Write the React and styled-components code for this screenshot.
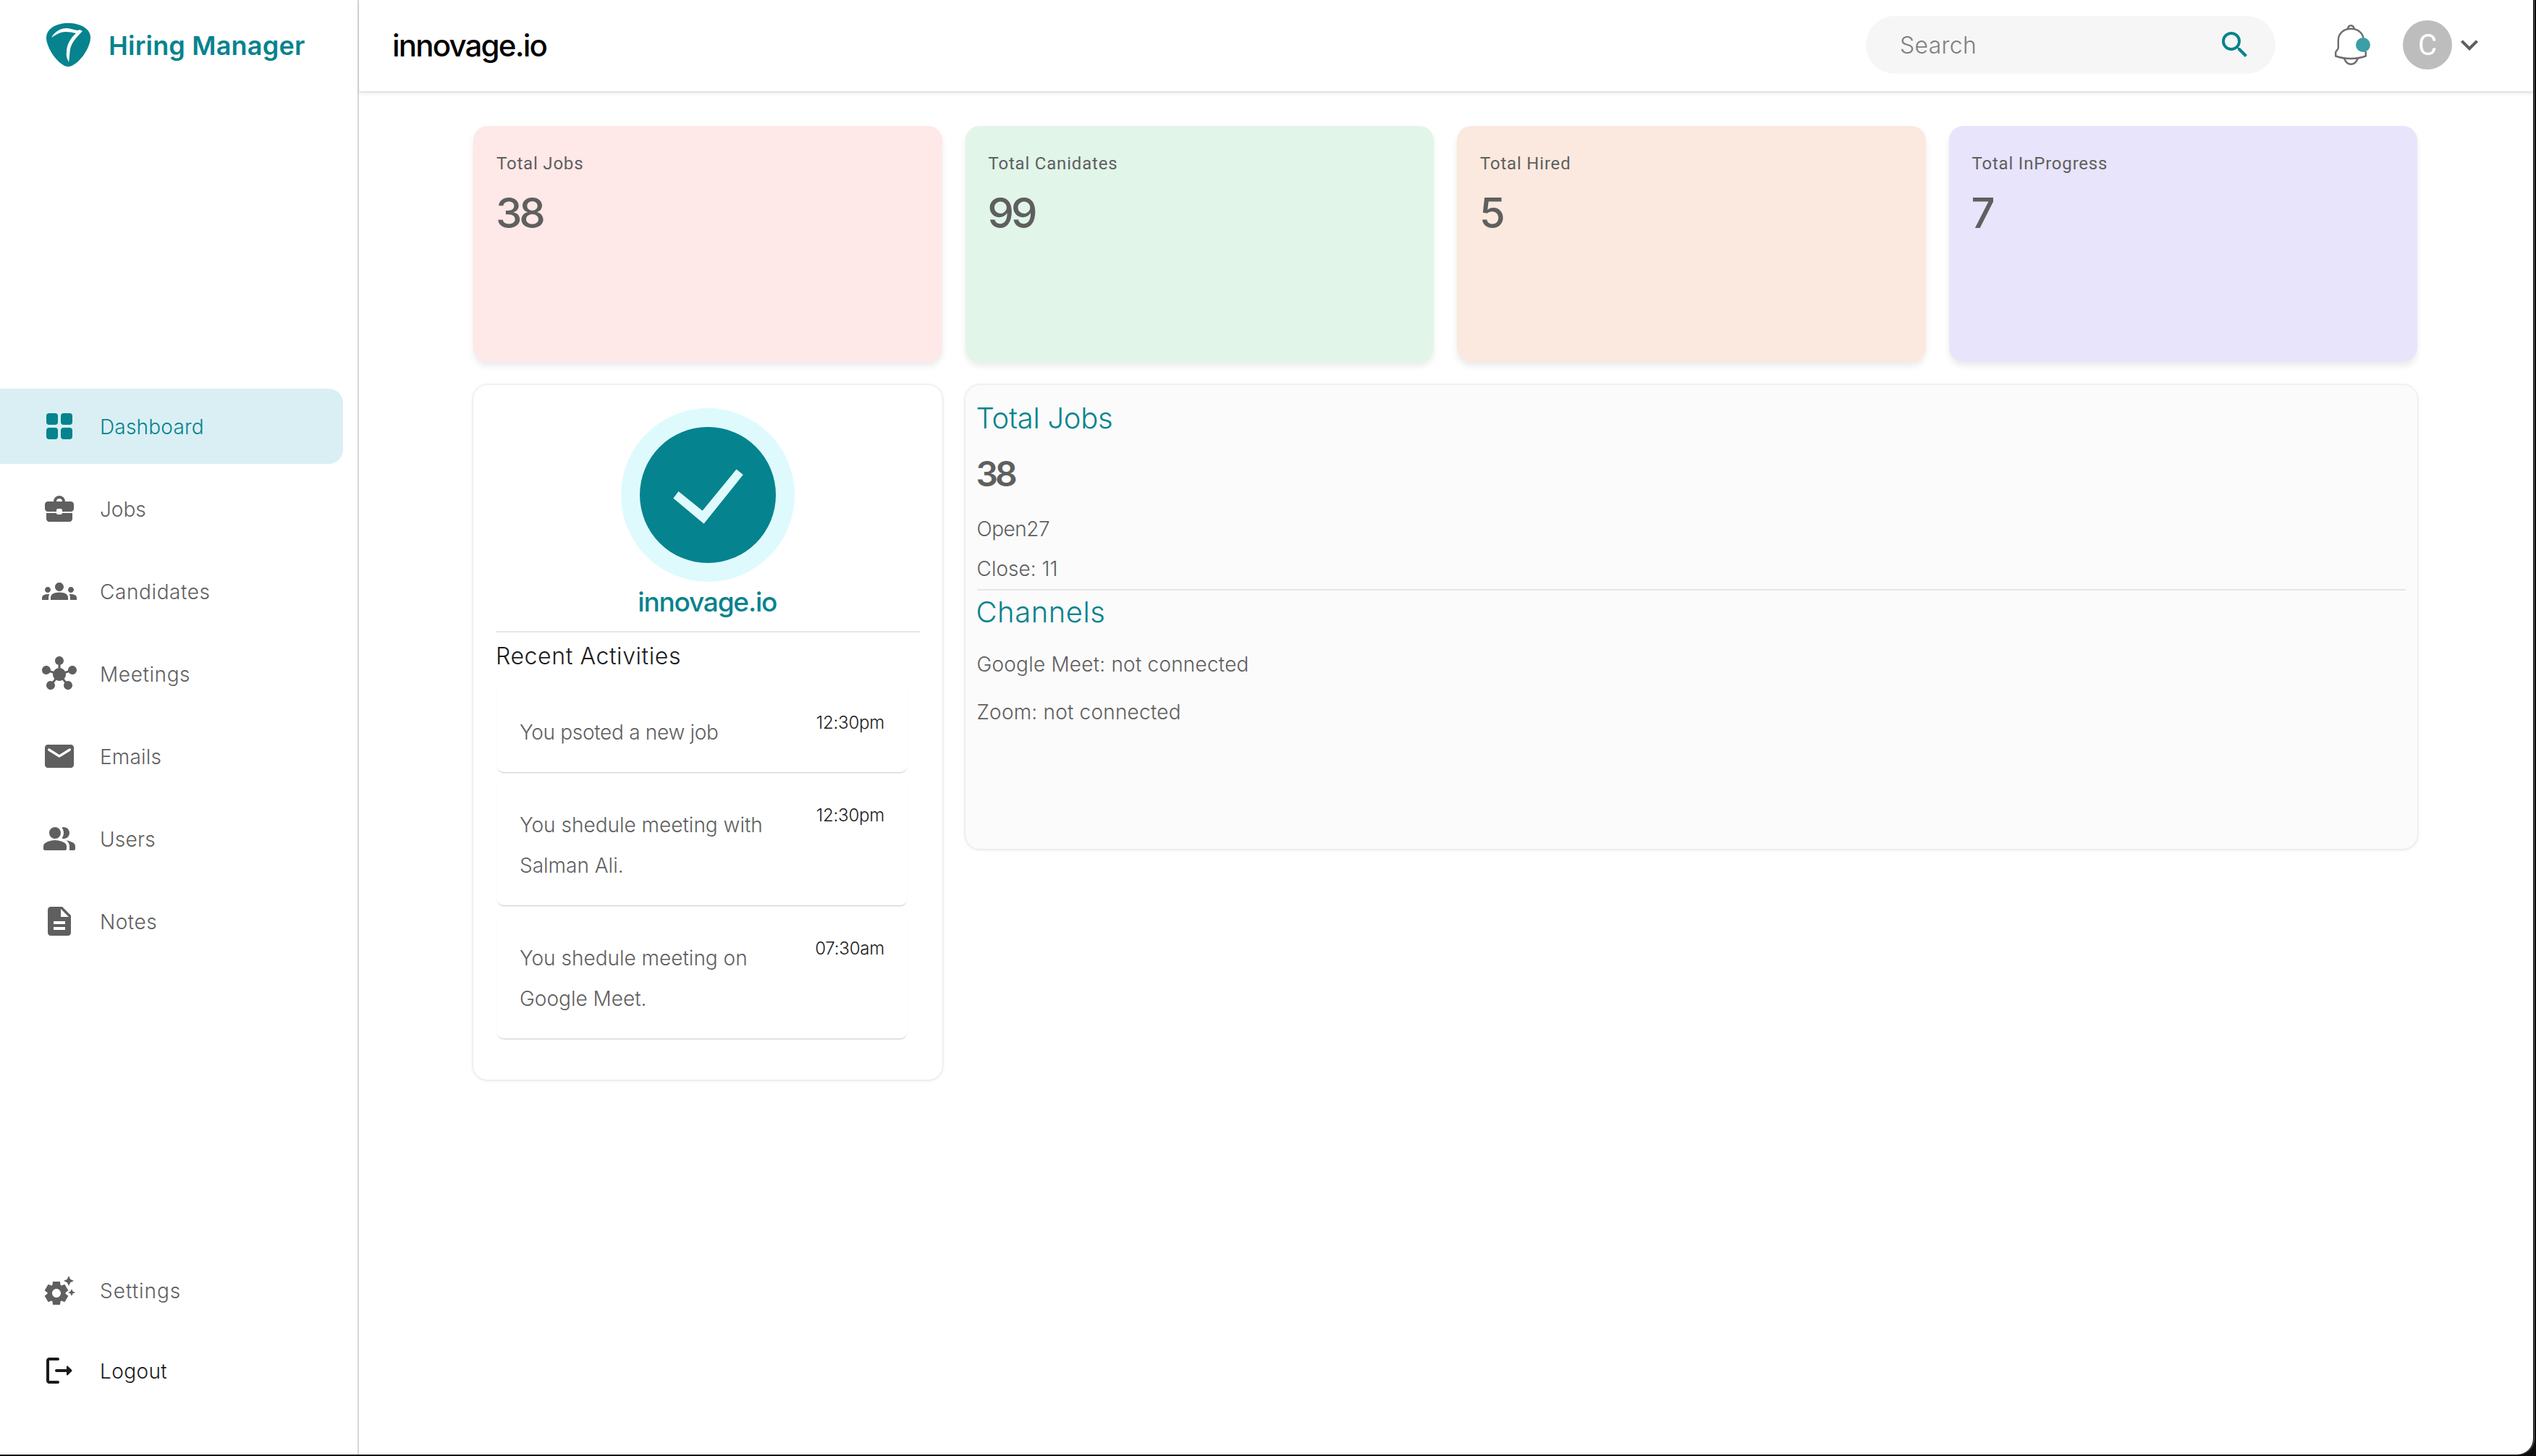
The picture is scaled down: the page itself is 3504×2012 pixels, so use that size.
import React from 'react';
import styled, { createGlobalStyle } from 'styled-components';
import {
  MdGroups,
  MdHub,
  MdDescription,
  MdSettingsSuggest,
  MdSearch,
  MdKeyboardArrowDown,
} from 'react-icons/md';

const teal = '#05838e';
const grey = '#5f5f5f';

const GridIcon = () => (
  <svg viewBox='0 0 24 24' fill='currentColor'>
    <rect x='3' y='3' width='8' height='8' rx='2' />
    <rect x='13' y='3' width='8' height='8' rx='2' />
    <rect x='3' y='13' width='8' height='8' rx='2' />
    <rect x='13' y='13' width='8' height='8' rx='2' />
  </svg>
);

const BriefcaseIcon = () => (
  <svg viewBox='0 0 24 24' fill='currentColor'>
    <path d='M8 7.2V7a4 4 0 0 1 8 0v.2h-2V7a2 2 0 0 0-4 0v.2z' />
    <path d='M4 7h16c1.1 0 2 .9 2 2v3c0 1.100-.9 2-2 2h-6v-1c0-.55-.45-1-1-1h-2c-.55 0-1 .45-1 1v1H4c-1.100 0-2-.9-2-2V9c0-1.100.9-2 2-2z' />
    <path d='M3 15h7c0 .55.45 1 1 1h2c.55 0 1-.45 1-1h7v4c0 1.100-.9 2-2 2H5c-1.100 0-2-.9-2-2z' />
  </svg>
);

const MailIcon = () => (
  <svg viewBox='0 0 24 24' fill='currentColor'>
    <path d='M20 4H4c-1.1 0-2 .9-2 2v12c0 1.1.9 2 2 2h16c1.1 0 2-.9 2-2V6c0-1.1-.9-2-2-2zm-.4 4.25l-7.07 4.42c-.32.2-.74.2-1.06 0L4.4 8.25c-.25-.16-.4-.43-.4-.72 0-.67.73-1.07 1.3-.72L12 11l6.7-4.19c.57-.35 1.3.05 1.3.72 0 .29-.15.56-.4.72z' />
  </svg>
);

const UsersIcon = () => (
  <svg viewBox='0 0 24 24' fill='currentColor'>
    <circle cx='9' cy='8' r='4' />
    <path d='M9 13c-2.67 0-8 1.34-8 4v2c0 .55.45 1 1 1h14c.55 0 1-.45 1-1v-2c0-2.66-5.33-4-8-4z' />
    <path d='M15 12c2.21 0 4-1.79 4-4s-1.79-4-4-4c-.47 0-.91.1-1.33.24C14.5 5.27 15 6.58 15 8s-.5 2.73-1.33 3.76c.42.14.86.24 1.33.24z' />
    <path d='M16.67 13.13C18.04 14.06 19 15.32 19 17v3h3c.55 0 1-.45 1-1v-2c0-2.18-3.57-3.47-6.33-3.87z' />
  </svg>
);

const LogoutIcon = () => (
  <svg viewBox='0 0 24 24' fill='currentColor'>
    <path d='M5 5h6c.55 0 1-.45 1-1s-.45-1-1-1H5c-1.1 0-2 .9-2 2v14c0 1.1.9 2 2 2h6c.55 0 1-.45 1-1s-.45-1-1-1H5V5z' />
    <path d='M20.65 11.65l-2.79-2.79c-.32-.32-.86-.1-.86.35V11h-7c-.55 0-1 .45-1 1s.45 1 1 1h7v1.79c0 .45.54.67.85.35l2.79-2.79c.2-.19.2-.51.01-.7z' />
  </svg>
);

const BrandMark = () => (
  <svg width='61' height='60' viewBox='0 0 61 60'>
    <path fill={teal} d='M30 0C48 0 61 8 61 20 61 35 43 60 30 60 18 60 0 35 0 20 0 8 13 0 30 0z' />
    <path fill='#fff' d='M7 20C12 11 20 7 28 7c6 0 11 3 16 3l2-1 4 2C41 20 35 27 33 36c-1 6-1 12-2 18C29 49 27 46 28 40c0-10 5-19 13-26C33 12 26 11 20 13 15 15 11 17 7 20z' />
  </svg>
);

const BellIcon = () => (
  <svg width='44' height='56' viewBox='0 0 44 56' fill='none' stroke='#6d6d6d' strokeWidth='2.4' strokeLinejoin='round'>
    <path d='M17.5 6.5C18.3 3 20 1.3 22.3 1.3S26.3 3 27.1 6.5' />
    <path d='M4.8 22C4.8 12 12.5 5.8 22.3 5.8S39.8 12 39.8 22v10c0 3 3 4.5 3 6.5v5C36 46 29 47 22 47S8 46 1.2 43.5v-5c0-2 3.6-3.5 3.6-6.5z' />
    <path d='M13 46.8C15 52 18 54.8 22.3 54.8S29.8 52 31.8 46.8' />
  </svg>
);

const mainLinks = [
  { label: 'Dashboard', icon: GridIcon, active: true, track: 0.2 },
  { label: 'Jobs', icon: BriefcaseIcon, track: 0 },
  { label: 'Candidates', icon: MdGroups, track: 0.6 },
  { label: 'Meetings', icon: MdHub, track: 0.6 },
  { label: 'Emails', icon: MailIcon, track: 0.2 },
  { label: 'Users', icon: UsersIcon, track: 0.2 },
  { label: 'Notes', icon: MdDescription, track: 0.5 },
];

const footLinks = [
  { label: 'Settings', icon: MdSettingsSuggest, track: 1 },
  { label: 'Logout', icon: LogoutIcon, dark: true, track: 0.4 },
];

const stats = [
  { label: 'Total Jobs', value: 38, color: '#fee8e8' },
  { label: 'Total Canidates', value: 99, color: '#e1f5e9' },
  { label: 'Total Hired', value: 5, color: '#fbe9df' },
  { label: 'Total InProgress', value: 7, color: '#e8e4fb' },
];

const activities = [
  { text: 'You psoted a new job', time: '12:30pm', track: -0.3 },
  { text: 'You shedule meeting with Salman Ali.', time: '12:30pm', track: 0 },
  { text: 'You shedule meeting on Google Meet.', time: '07:30am', track: 0 },
];

const NavItem = ({ item }) => {
  const Icon = item.icon;
  return (
    <NavLink $active={item.active} $dark={item.dark}>
      <Icon />
      <NavLabel $track={item.track}>{item.label}</NavLabel>
    </NavLink>
  );
};

export default function App() {
  return (
    <Window>
      <GlobalStyle />
      <Sidebar>
        <Brand>
          <BrandMark />
          <BrandName>Hiring Manager</BrandName>
        </Brand>
        <Nav>
          {mainLinks.map(item => <NavItem key={item.label} item={item} />)}
        </Nav>
        <FootNav>
          {footLinks.map(item => <NavItem key={item.label} item={item} />)}
        </FootNav>
      </Sidebar>
      <Page>
        <Header>
          <Company>innovage.io</Company>
          <SearchBox>
            <span>Search</span>
            <MdSearch />
          </SearchBox>
          <Bell>
            <BellIcon />
            <BellDot />
          </Bell>
          <Avatar>C</Avatar>
          <MdKeyboardArrowDown />
        </Header>
        <Content>
          {stats.map(stat => (
            <StatCard key={stat.label} $color={stat.color}>
              <StatLabel>{stat.label}</StatLabel>
              <StatValue>{stat.value}</StatValue>
            </StatCard>
          ))}
          <ActivityPanel>
            <Badge>
              <svg width='240' height='240' viewBox='0 0 240 240'>
                <circle cx='120' cy='120' r='120' fill='#dffafd' />
                <circle cx='120' cy='120' r='94' fill={teal} />
                <path fill='#dffafd' d='M79.5 115 112.6 141.7 159.5 84.5 168.8 92 114.5 159.8 72.3 124.6z' />
              </svg>
            </Badge>
            <PanelName>innovage.io</PanelName>
            <Divider />
            <ActivityTitle>Recent Activities</ActivityTitle>
            {activities.map(activity => (
              <Activity key={activity.text}>
                <ActivityText $track={activity.track}>{activity.text}</ActivityText>
                <ActivityTime>{activity.time}</ActivityTime>
              </Activity>
            ))}
          </ActivityPanel>
          <JobsPanel>
            <PanelTitle $track={-0.3}>Total Jobs</PanelTitle>
            <JobsCount>38</JobsCount>
            <JobsLine $track={-0.5}>Open27</JobsLine>
            <JobsLine>Close: 11</JobsLine>
            <Divider />
            <PanelTitle $track={0.5}>Channels</PanelTitle>
            <Channels>
              <ChannelLine>Google Meet: not connected</ChannelLine>
              <ChannelLine>Zoom: not connected</ChannelLine>
            </Channels>
          </JobsPanel>
        </Content>
      </Page>
    </Window>
  );
}

const GlobalStyle = createGlobalStyle`
  * {
    box-sizing: border-box;
  }
  body {
    margin: 0;
    background: #0b0c0e;
    font-family: Inter, 'Liberation Sans', sans-serif;
    overflow: hidden;
  }
  svg {
    display: block;
    flex: none;
  }
`

const Window = styled.div`
  display: flex;
  width: 3500px;
  height: 2010px;
  background: #fff;
  border-bottom-right-radius: 22px;
  box-shadow: 1px 0 0 #000, 2px 0 0 #6a6a6a;
`

const Sidebar = styled.aside`
  display: flex;
  flex-direction: column;
  flex: none;
  width: 496px;
  padding-bottom: 64px;
  border-right: 2px solid #d6d6d6;
`

const Brand = styled.div`
  display: flex;
  align-items: center;
  gap: 25px;
  height: 124px;
  padding-left: 64px;
`

const BrandName = styled.span`
  padding-top: 2px;
  font-size: 36px;
  font-weight: 600;
  letter-spacing: 0.2px;
  color: ${teal};
`

const Nav = styled.nav`
  display: flex;
  flex-direction: column;
  gap: 10px;
  margin-top: 413px;
`

const FootNav = styled(Nav)`
  gap: 7px;
  margin-top: auto;
`

const NavLink = styled.a`
  display: flex;
  align-items: center;
  gap: 31px;
  width: 474px;
  height: 104px;
  padding-left: 58px;
  border-radius: 0 20px 20px 0;
  background: ${props => (props.$active ? '#daeff4' : 'transparent')};
  color: ${props => (props.$active ? teal : props.$dark ? '#1b1b1b' : grey)};
  svg {
    width: 48px;
    height: 48px;
  }
`

const NavLabel = styled.span`
  padding: 2px 0 0 1px;
  font-size: 28px;
  font-weight: 360;
  letter-spacing: ${props => props.$track}px;
`

const Page = styled.div`
  flex: 1;
  min-width: 0;
`

const Header = styled.header`
  display: flex;
  align-items: center;
  height: 126px;
  padding: 0 64px 2px 46px;
  color: ${grey};
  box-shadow: 0 2px 2px rgba(0, 0, 0, 0.08), 0 4px 6px rgba(0, 0, 0, 0.06);
  > svg {
    width: 48px;
    height: 48px;
  }
`

const Company = styled.h1`
  margin: 0 auto 0 0;
  font-size: 42px;
  font-weight: 500;
  letter-spacing: -1.8px;
  color: #000;
`

const SearchBox = styled.div`
  display: flex;
  align-items: center;
  justify-content: space-between;
  width: 566px;
  height: 80px;
  padding: 0 32px 0 47px;
  border-radius: 40px;
  background: #f6f6f6;
  font-size: 32px;
  font-weight: 350;
  letter-spacing: 0.3px;
  color: #808080;
  svg {
    width: 48px;
    height: 48px;
    color: ${teal};
  }
`

const Bell = styled.div`
  position: relative;
  margin: 0 50px 0 82px;
`

const BellDot = styled.span`
  position: absolute;
  top: 18px;
  left: 29px;
  width: 20px;
  height: 20px;
  border-radius: 50%;
  background: #3b9fa6;
`

const Avatar = styled.div`
  display: flex;
  align-items: center;
  justify-content: center;
  width: 68px;
  height: 68px;
  border-radius: 50%;
  background: #bdbdbd;
  font-family: Roboto, sans-serif;
  font-size: 40px;
  color: #fff;
`

const Content = styled.main`
  display: grid;
  grid-template-columns: repeat(4, 1fr);
  gap: 32px;
  align-items: start;
  width: 2844px;
  padding: 48px 0 0 158px;
`

const StatCard = styled.section`
  height: 326px;
  padding: 32px;
  border-radius: 20px;
  background: ${props => props.$color};
  box-shadow: 0 6px 8px rgba(0, 0, 0, 0.08);
`

const StatLabel = styled.div`
  font-family: Roboto, sans-serif;
  font-size: 24px;
  line-height: 40px;
  letter-spacing: 0.8px;
  color: ${grey};
`

const StatValue = styled.div`
  margin: 12px 0 0 -1px;
  font-size: 58px;
  font-weight: 550;
  line-height: 72px;
  letter-spacing: -4px;
  color: ${grey};
`

const Panel = styled.section`
  border-radius: 20px;
  box-shadow: 0 0 3px 1px rgba(0, 0, 0, 0.07), 0 1px 6px rgba(0, 0, 0, 0.08);
`

const ActivityPanel = styled(Panel)`
  height: 960px;
  padding: 32px 31px 0 32px;
`

const Badge = styled.div`
  display: flex;
  justify-content: center;
`

const PanelName = styled.div`
  margin: 0 2px 12px 0;
  font-size: 37px;
  font-weight: 500;
  line-height: 56px;
  letter-spacing: -1.2px;
  text-align: center;
  color: ${teal};
`

const Divider = styled.div`
  height: 2px;
  background: #e6e6e6;
`

const ActivityTitle = styled.div`
  margin-left: -1px;
  font-size: 32px;
  font-weight: 360;
  line-height: 65px;
  letter-spacing: 0.6px;
  color: #1b1b1b;
`

const Activity = styled.div`
  display: flex;
  justify-content: space-between;
  width: 568px;
  padding: 45px 32px 27px;
  border-radius: 10px;
  box-shadow: 0 2px 2px -1px rgba(0, 0, 0, 0.22);
`

const ActivityText = styled.div`
  width: 350px;
  font-size: 28px;
  font-weight: 360;
  line-height: 56px;
  letter-spacing: ${props => props.$track}px;
  color: ${grey};
`

const ActivityTime = styled.div`
  padding-top: 1px;
  font-size: 24px;
  font-weight: 350;
  line-height: 28px;
  letter-spacing: -0.2px;
  color: #1b1b1b;
`

const JobsPanel = styled(Panel)`
  grid-column: span 3;
  height: 641px;
  padding: 16px;
  background: #fbfbfb;
  color: ${grey};
`

const PanelTitle = styled.h2`
  margin: 0 0 0 -1px;
  font-size: 40px;
  font-weight: 350;
  line-height: 60px;
  letter-spacing: ${props => props.$track}px;
  color: ${teal};
`

const JobsCount = styled.div`
  margin-left: -1px;
  padding-bottom: 3px;
  font-size: 48px;
  font-weight: 600;
  line-height: 93px;
  letter-spacing: -4px;
`

const JobsLine = styled.div`
  font-size: 28px;
  font-weight: 360;
  line-height: 55px;
  letter-spacing: ${props => props.$track || 0}px;
`

const Channels = styled.div`
  padding-top: 9px;
`

const ChannelLine = styled.div`
  font-size: 28px;
  font-weight: 360;
  line-height: 66px;
  letter-spacing: 0.2px;
`
